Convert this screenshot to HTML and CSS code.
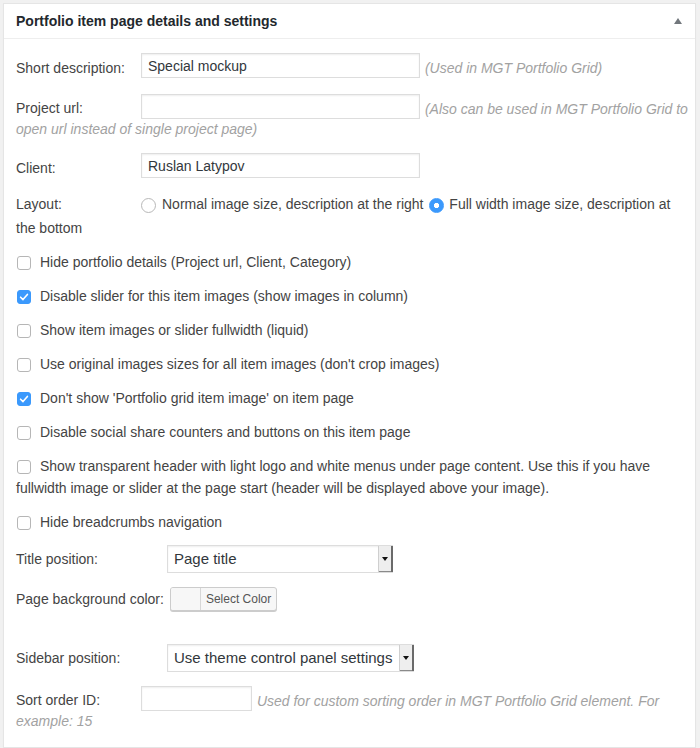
FILE: index.html
```html
<!DOCTYPE html>
<html lang="en">
<head>
<meta charset="utf-8">
<title>Portfolio item page details and settings</title>
<link rel="stylesheet" href="styles.css">
</head>
<body>
<div class="page">
  <div class="panel">
    <div class="panel-header">
      <h2 class="panel-title">Portfolio item page details and settings</h2>
      <span class="toggle" aria-hidden="true"></span>
    </div>
    <div class="panel-body">
      <div class="field gap-15">
        <span class="label">Short description:</span><input class="text-input wide" type="text" value="Special mockup"> <span class="hint">(Used in MGT Portfolio Grid)</span>
      </div>
      <div class="field gap-13">
        <span class="label">Project url:</span><input class="text-input wide" type="text" value=""> <span class="hint">(Also can be used in MGT Portfolio Grid to open url instead of single project page)</span>
      </div>
      <div class="field gap-13">
        <span class="label">Client:</span><input class="text-input wide" type="text" value="Ruslan Latypov">
      </div>
      <div class="layout-row">
        <span class="label">Layout:</span><label class="radio-opt"><span class="radio"></span>Normal image size, description at the right</label> <label class="radio-opt"><span class="radio second checked"></span>Full width image size, description at the bottom</label>
      </div>

      <div class="check"><span class="cb"></span>Hide portfolio details (Project url, Client, Category)</div>
      <div class="check"><span class="cb checked"><svg viewBox="0 0 12 12" width="12" height="12"><path d="M2.6 6.2 L5 8.6 L9.4 3.4" fill="none" stroke="#fff" stroke-width="1.6" stroke-linecap="round" stroke-linejoin="round"/></svg></span>Disable slider for this item images (show images in column)</div>
      <div class="check"><span class="cb"></span>Show item images or slider fullwidth (liquid)</div>
      <div class="check"><span class="cb"></span>Use original images sizes for all item images (don't crop images)</div>
      <div class="check"><span class="cb checked"><svg viewBox="0 0 12 12" width="12" height="12"><path d="M2.6 6.2 L5 8.6 L9.4 3.4" fill="none" stroke="#fff" stroke-width="1.6" stroke-linecap="round" stroke-linejoin="round"/></svg></span>Don't show 'Portfolio grid item image' on item page</div>
      <div class="check"><span class="cb"></span>Disable social share counters and buttons on this item page</div>
      <div class="check"><span class="cb"></span>Show transparent header with light logo and white menus under page content. Use this if you have fullwidth image or slider at the page start (header will be displayed above your image).</div>
      <div class="check"><span class="cb"></span>Hide breadcrumbs navigation</div>

      <div class="select-row gap-14">
        <span class="label label-wide">Title position:</span>
        <span class="select select-title"><span class="select-value">Page title</span><span class="select-arrow"></span></span>
      </div>
      <div class="color-row">
        <span class="label-plain">Page background color:</span>
        <button class="color-btn" type="button"><span class="swatch"></span><span class="color-text">Select Color</span></button>
      </div>
      <div class="select-row gap-14">
        <span class="label label-wide">Sidebar position:</span>
        <span class="select select-sidebar"><span class="select-value">Use theme control panel settings</span><span class="select-arrow"></span></span>
      </div>
      <div class="field">
        <span class="label">Sort order ID:</span><input class="text-input narrow" type="text" value=""> <span class="hint">Used for custom sorting order in MGT Portfolio Grid element. For example: 15</span>
      </div>
    </div>
  </div>
</div>
</body>
</html>
```

FILE: styles.css
```css
* { box-sizing: border-box; }
html, body { margin: 0; padding: 0; }
body {
  background: #f1f1f1;
  font-family: "Liberation Sans", Arial, sans-serif;
  font-size: 14px;
  color: #444;
}
.page { padding: 3px 4px 0 3px; }
.panel {
  background: #fff;
  border: 1px solid #e5e5e5;
  box-shadow: 0 1px 1px rgba(0,0,0,.04);
}
.panel-header {
  display: flex;
  align-items: center;
  justify-content: space-between;
  height: 35px;
  padding: 0 12px;
  border-bottom: 1px solid #eee;
}
.panel-title {
  margin: 0;
  font-size: 14px;
  font-weight: bold;
  line-height: 34px;
  color: #23282d;
}
.toggle {
  width: 0; height: 0;
  border-left: 4px solid transparent;
  border-right: 4px solid transparent;
  border-bottom: 6px solid #72777c;
  margin-right: 1px;
}
.panel-body { padding: 14px 3px 15px 12px; }

.label { display: inline-block; width: 125px; line-height: 16px; }
.label-wide { width: 151px; flex: none; }

.field { line-height: 21px; }
.gap-15 { margin-bottom: 15px; }
.gap-14 { margin-bottom: 14px; }
.gap-13 { margin-bottom: 13px; }

.text-input {
  height: 25px;
  margin: 0 1px 0 0;
  padding: 0 6px;
  border: 1px solid #ddd;
  box-shadow: inset 0 1px 2px rgba(0,0,0,.07);
  background: #fff;
  font-family: "Liberation Sans", Arial, sans-serif;
  font-size: 14px;
  color: #32373c;
  vertical-align: 2px;
  outline: none;
}
.wide { width: 279px; }
.narrow { width: 111px; }
.hint { font-style: italic; color: #a2a2a2; }

.layout-row { line-height: 24px; margin-bottom: 11px; }
.radio {
  display: inline-block;
  width: 15px; height: 15px;
  border: 1px solid #b8b8b8;
  border-radius: 50%;
  background: #fff;
  vertical-align: -4px;
  margin-right: 6px;
}
.radio.second { margin-left: 2px; margin-right: 5px; }
.radio.checked {
  border-color: #3b99fc;
  background: radial-gradient(circle, #fff 0 2.4px, #3b99fc 2.9px);
}

.check { line-height: 22px; margin-bottom: 12px; }
.cb {
  display: inline-block;
  width: 14px; height: 14px;
  margin: 0 9px 0 1px;
  border: 1px solid #b6b6b6;
  border-radius: 3px;
  background: #fff;
  vertical-align: -3px;
}
.cb.checked { background: #3b99fc; border-color: #3b99fc; }
.cb svg { display: block; }

.select-row { display: flex; align-items: center; line-height: 22px; }
.select {
  display: flex;
  height: 28px;
  border: 1px solid #ddd;
  border-right: 0;
  background: #fff;
  box-shadow: inset 0 1px 2px rgba(0,0,0,.07);
}
.select-title { width: 226px; }
.select-sidebar { width: 247px; }
.select-value {
  flex: 1;
  padding: 0 6px;
  font-size: 15px;
  line-height: 26px;
  color: #32373c;
  white-space: nowrap;
}
.select-arrow {
  flex: none;
  width: 15px;
  display: flex;
  align-items: center;
  justify-content: center;
  background: #eeeeee;
  border-left: 1px solid #cfcfcf;
  border-right: 2px solid #6a6a6a;
  box-shadow: inset 0 -1px 0 #8a8a8a;
}
.select-arrow::after {
  content: "";
  width: 0; height: 0;
  border-left: 3px solid transparent;
  border-right: 3px solid transparent;
  border-top: 4px solid #111;
}

.color-row { display: flex; align-items: center; line-height: 22px; margin-bottom: 33px; }
.label-plain { margin-right: 6px; }
.color-btn {
  display: inline-flex;
  height: 24px;
  padding: 0;
  border: 1px solid #ccc;
  border-radius: 3px;
  background: #f7f7f7;
  box-shadow: 0 1px 0 #ccc;
  font-family: "Liberation Sans", Arial, sans-serif;
  font-size: 12px;
  color: #555;
  cursor: pointer;
}
.swatch { width: 29px; border-radius: 2px 0 0 2px; background: #f7f7f7; }
.color-text {
  border-left: 1px solid #d7d7d7;
  padding: 0 5px;
  line-height: 22px;
}
```
